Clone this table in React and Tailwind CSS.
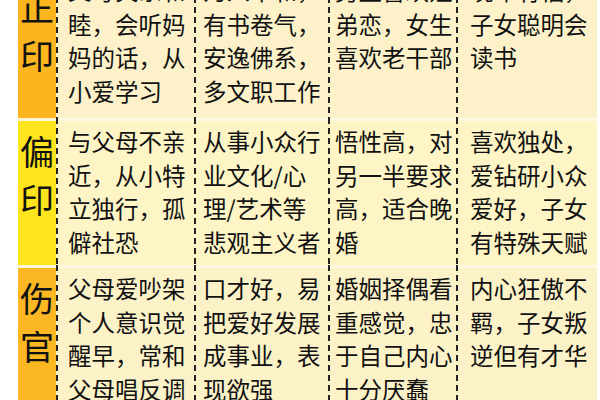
import React from 'react';

const rows = [
    {
        label: ['正', '印'],
        labelBg: 'bg-[#fbb51f]',
        rowBg: 'bg-[#fcf1c9]',
        h: 'h-[151px]',
        labelPt: 'pt-[13px]',
        cells: [
            ['父母关系和', '睦，会听妈', '妈的话，从', '小爱学习'],
            ['为人平和，', '有书卷气，', '安逸佛系，', '多文职工作'],
            ['男生喜欢姐', '弟恋，女生', '喜欢老干部'],
            ['晚年有福，', '子女聪明会', '读书'],
        ],
    },
    {
        label: ['偏', '印'],
        labelBg: 'bg-[#fde41c]',
        rowBg: 'bg-[#fdf5c6]',
        h: 'h-[147px]',
        labelPt: 'pt-[6px]',
        cells: [
            ['与父母不亲', '近，从小特', '立独行，孤', '僻社恐'],
            ['从事小众行', '业文化/心', '理/艺术等', '悲观主义者'],
            ['悟性高，对', '另一半要求', '高，适合晚', '婚'],
            ['喜欢独处，', '爱钻研小众', '爱好，子女', '有特殊天赋'],
        ],
    },
    {
        label: ['伤', '官'],
        labelBg: 'bg-[#fbb823]',
        rowBg: 'bg-[#fcf2c8]',
        h: 'h-[147px]',
        labelPt: 'pt-[6px]',
        cells: [
            ['父母爱吵架', '个人意识觉', '醒早，常和', '父母唱反调'],
            ['口才好，易', '把爱好发展', '成事业，表', '现欲强'],
            ['婚姻择偶看', '重感觉，忠', '于自己内心', '十分厌蠢'],
            ['内心狂傲不', '羁，子女叛', '逆但有才华'],
        ],
    },
];

// column widths + left padding, measured off the reference
const cols = [
    { w: 'w-[136px]', pl: 'pl-[10px]' },
    { w: 'w-[132px]', pl: 'pl-[7px]' },
    { w: 'w-[126px]', pl: 'pl-[5px]' },
    { w: 'w-[139px]', pl: 'pl-[12px]' },
];

const Divider = () => (
    <div className="w-[2px] shrink-0 bg-[repeating-linear-gradient(to_bottom,#222_0px,#222_6px,transparent_6px,transparent_10px)]"></div>
);

const App = () => {
    return (
        <div className="w-[600px] h-[400px] overflow-hidden bg-white font-['Noto_Sans_CJK_SC',sans-serif] text-[#111]">
            <div className="ml-[18px] w-[579px] mt-[-33px] flex flex-col">
                {rows.map((row, i) => (
                    <div key={i} className={`flex ${row.rowBg} ${row.h}`}>
                        {/* label */}
                        <div className={`w-[38px] shrink-0 ${row.labelBg} border-t-[3px] border-[#fdf6d6] flex flex-col items-center ${row.labelPt} text-[34px] leading-[48px]`}>
                            {row.label.map((c) => (
                                <span key={c}>{c}</span>
                            ))}
                        </div>
                        <Divider />
                        {row.cells.map((lines, j) => (
                            <React.Fragment key={j}>
                                <div className={`${cols[j].w} ${cols[j].pl} shrink-0 border-t-[3px] border-[#fefae2] pt-[4px] text-[23.5px] leading-[33.5px] whitespace-nowrap`}>
                                    {lines.map((l, k) => (
                                        <div key={k}>{l}</div>
                                    ))}
                                </div>
                                {j < 3 && <Divider />}
                            </React.Fragment>
                        ))}
                    </div>
                ))}
            </div>
        </div>
    );
};

export default App;
